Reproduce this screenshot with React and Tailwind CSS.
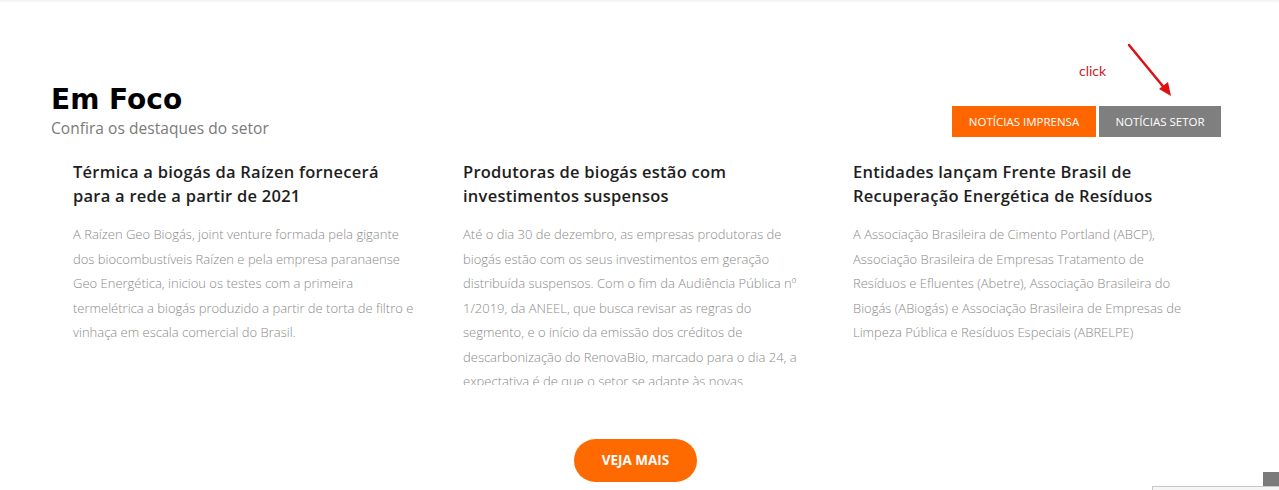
import React from 'react';

const news = [
  {
    title: 'Térmica a biogás da Raízen fornecerá para a rede a partir de 2021',
    lines: [
      'A Raízen Geo Biogás, joint venture formada pela gigante',
      'dos biocombustíveis Raízen e pela empresa paranaense',
      'Geo Energética, iniciou os testes com a primeira',
      'termelétrica a biogás produzido a partir de torta de filtro e',
      'vinhaça em escala comercial do Brasil.',
    ],
  },
  {
    title: 'Produtoras de biogás estão com investimentos suspensos',
    lines: [
      'Até o dia 30 de dezembro, as empresas produtoras de',
      'biogás estão com os seus investimentos em geração',
      'distribuída suspensos. Com o fim da Audiência Pública nº',
      '1/2019, da ANEEL, que busca revisar as regras do',
      'segmento, e o início da emissão dos créditos de',
      'descarbonização do RenovaBio, marcado para o dia 24, a',
      'expectativa é de que o setor se adapte às novas',
    ],
  },
  {
    title: 'Entidades lançam Frente Brasil de Recuperação Energética de Resíduos',
    lines: [
      'A Associação Brasileira de Cimento Portland (ABCP),',
      'Associação Brasileira de Empresas Tratamento de',
      'Resíduos e Efluentes (Abetre), Associação Brasileira do',
      'Biogás (ABiogás) e Associação Brasileira de Empresas de',
      'Limpeza Pública e Resíduos Especiais (ABRELPE)',
    ],
  },
];

function NewsCard({ item }) {
  return (
    <div className="px-[22px]">
      <h3 className="font-['Open_Sans',sans-serif] font-semibold text-[16.5px] leading-[24px] tracking-[0.25px] text-[#1e1e1e]">
        {item.title}
      </h3>
      {/* excerpt is cut off mid-line, like the original teaser */}
      <div className="mt-[14px] w-[370px] max-h-[163px] overflow-hidden font-['Open_Sans',sans-serif] font-light text-[13px] leading-[24.5px] text-[#8a8a8a]">
        {item.lines.map((l, i) => (
          <p key={i} className="whitespace-nowrap">{l}</p>
        ))}
      </div>
    </div>
  );
}

export default function App() {
  return (
    <div className="relative w-[1279px] h-[490px] bg-white overflow-hidden">
      {/* faint top shadow */}
      <div className="h-[3px] bg-gradient-to-b from-[#f2f2f2] to-white" />

      <div className="ml-[51px] w-[1170px] pt-[82px]">
        <div className="flex items-end justify-between">
          <div>
            <h2 className="font-['DejaVu_Sans',sans-serif] font-bold text-[28px] leading-[30px] text-black">
              Em Foco
            </h2>
            <p className="mt-[3px] font-['Open_Sans',sans-serif] text-[15.5px] leading-[20px] tracking-[0.05px] text-[#7a7a7a]">
              Confira os destaques do setor
            </p>
          </div>
          <div className="relative flex gap-[3px] mb-[1px]">
            <span className="absolute left-[127px] top-[-46px] font-['Lato',sans-serif] text-[14px] text-[#c8232c]">
              click
            </span>
            <svg className="absolute left-[174px] top-[-63px]" width="50" height="58" viewBox="0 0 50 58">
              <line x1="3" y1="2" x2="40" y2="47" stroke="#e01010" strokeWidth="2.5" strokeLinecap="round" />
              <polygon points="45,53 33,46 42,39" fill="#e01010" />
            </svg>
            <button className="w-[144px] h-[31px] bg-[#ff6600] text-white font-['Open_Sans',sans-serif] font-medium text-[11.5px] uppercase">
              Notícias Imprensa
            </button>
            <button className="w-[122px] h-[31px] bg-[#7f7f7f] text-white font-['Open_Sans',sans-serif] font-medium text-[11.5px] uppercase">
              Notícias Setor
            </button>
          </div>
        </div>

        <div className="grid grid-cols-3 mt-[22px]">
          {news.map((n, i) => (
            <NewsCard key={i} item={n} />
          ))}
        </div>

        <div className="flex justify-center mt-[54px] pr-[1px]">
          <button className="w-[123px] h-[43px] rounded-full bg-[#ff6a00] text-white font-['Open_Sans',sans-serif] font-bold text-[13.5px]">
            VEJA MAIS
          </button>
        </div>
      </div>

      {/* partial badge bottom right */}
      <div className="absolute right-0 top-[472px] w-[16px] h-[14px] bg-[#7a7a7a]" />
      <div className="absolute left-[1152px] top-[486px] w-[127px] h-[4px] bg-[#f5f5f5] border-t border-l border-[#c8c8c8]" />
    </div>
  );
}
